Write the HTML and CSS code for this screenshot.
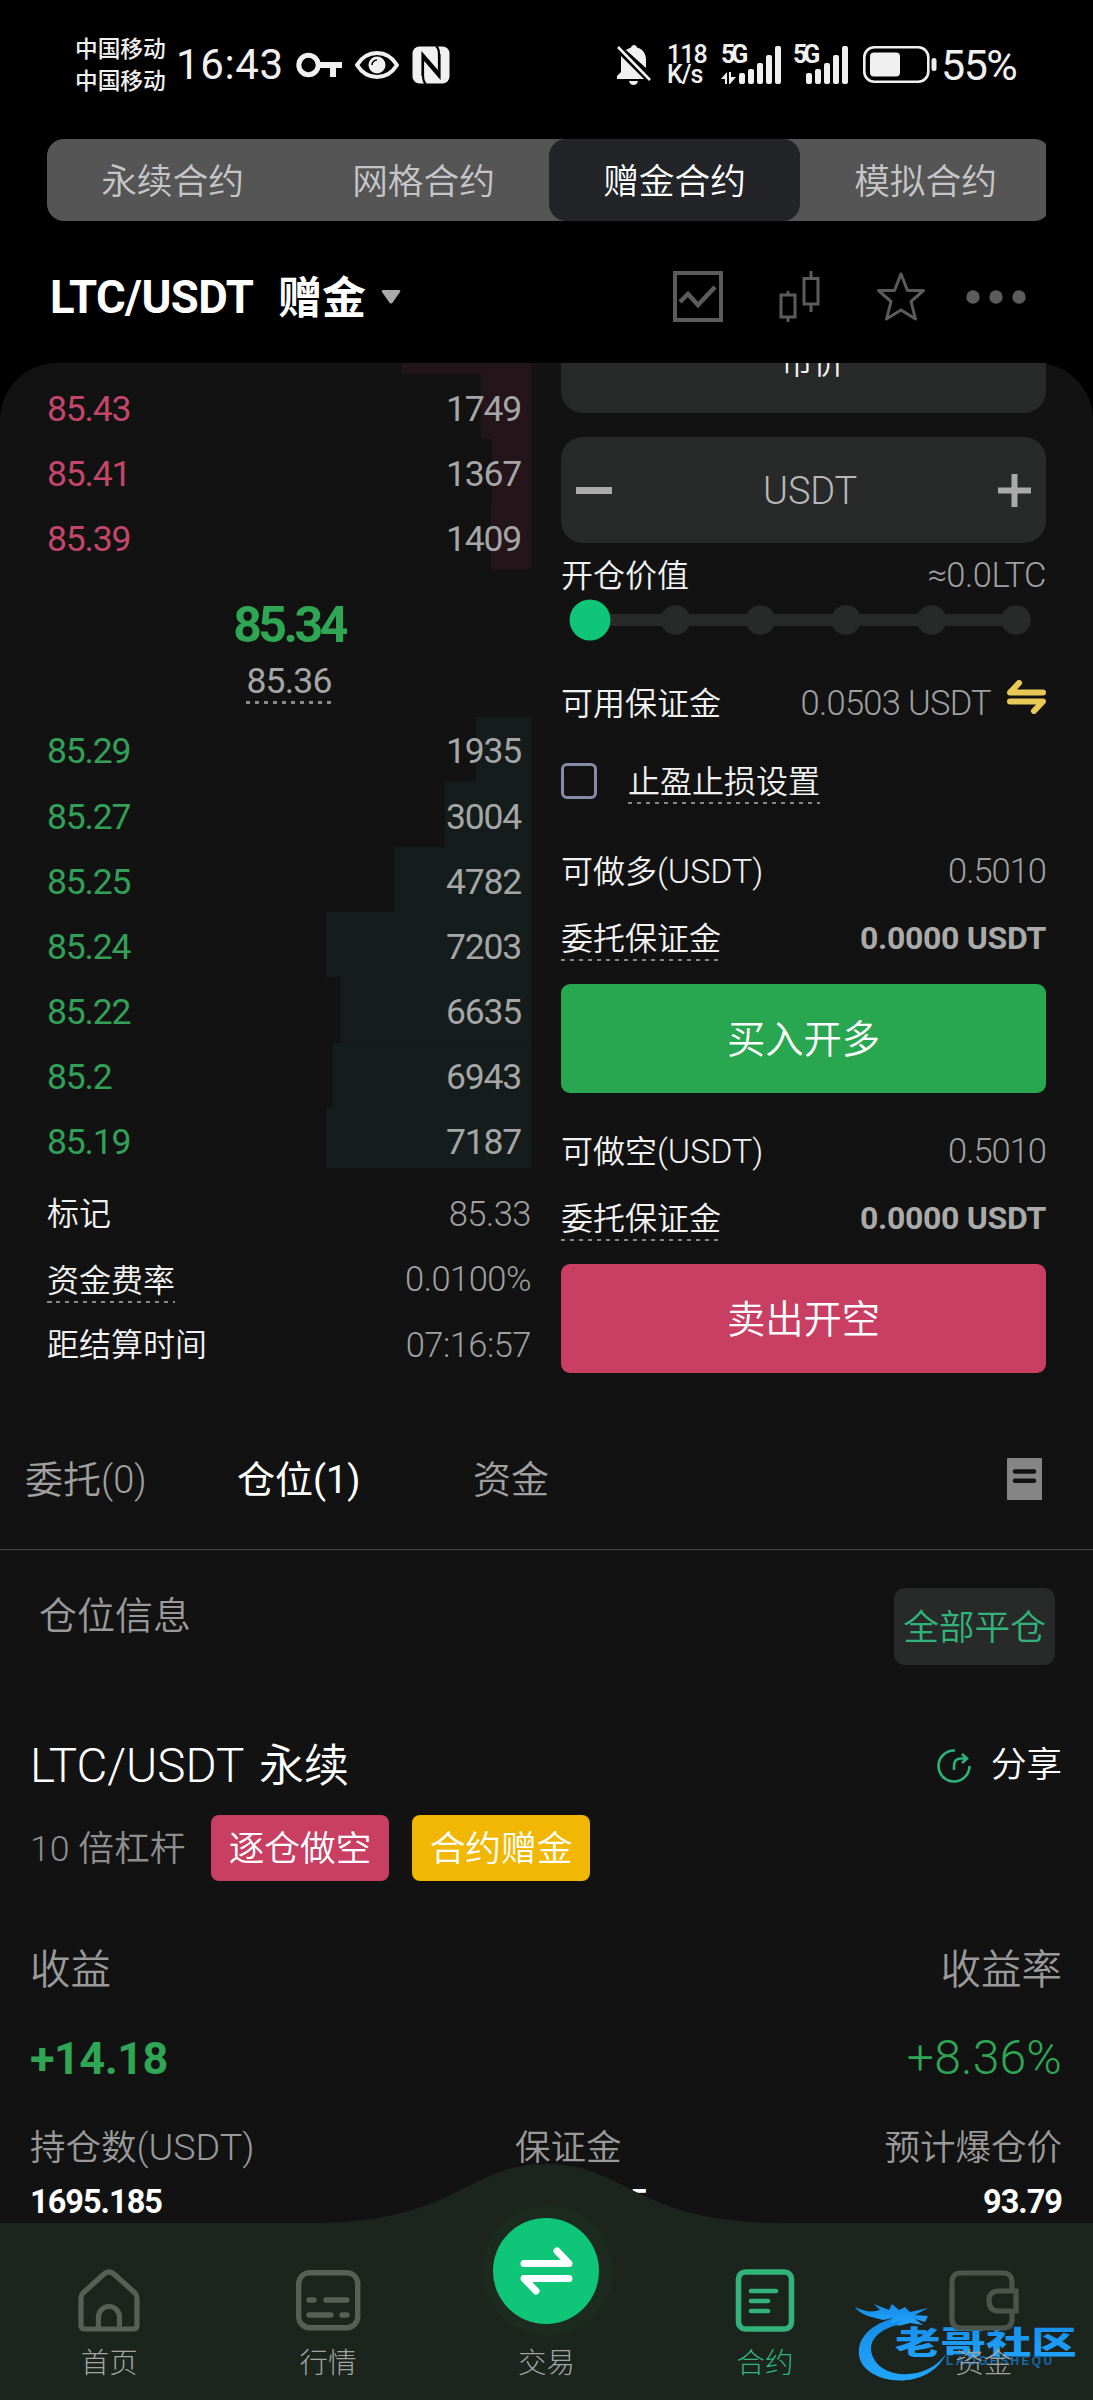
FILE: index.html
```html
<!DOCTYPE html>
<html lang="zh-CN">
<head>
<meta charset="utf-8">
<title>LTC/USDT 赠金合约</title>
<link rel="stylesheet" href="styles.css">
</head>
<body>
<div class="phone">
  <header class="status">
    <div class="carrier"><span>中国移动</span><span>中国移动</span></div>
    <span class="clock">16:43</span>
    <svg class="i-key" width="47" height="26" viewBox="0 0 47 26" fill="none" stroke="#f0f0f0"><circle cx="12.5" cy="13" r="9.7" stroke-width="5"/><path d="M22 13H46M37 13V25" stroke-width="6"/></svg>
    <svg class="i-eye" width="44" height="30" viewBox="0 0 44 30"><path d="M2 15C12-1 32-1 42 15C32 31 12 31 2 15Z" fill="none" stroke="#f0f0f0" stroke-width="4"/><circle cx="22" cy="15" r="8.5" fill="#f0f0f0"/><path d="M17 15a5 5 0 0 1 5-5" fill="none" stroke="#000" stroke-width="1.6"/></svg>
    <svg class="i-nfc" width="38" height="38" viewBox="0 0 38 38"><rect x=".5" y=".5" width="37" height="37" rx="7" fill="#f0f0f0"/><path d="M10.500 30V8L27 27V9Q27 2 24 0M27.500 8V31L11 12V29Q11 36 14 38" fill="none" stroke="#000" stroke-width="2.200"/></svg>
    <span class="grow"></span>
    <svg class="i-bell" width="36" height="40" viewBox="0 0 36 40"><path d="M18 0a3 3 0 0 1 3 2.500C27 4 30 9 30 15V23L10 5Q12 3.500 15 2.500A3 3 0 0 1 18 0ZM5 11L28 34H1V31L5 27Z" fill="#f0f0f0"/><path d="M13 36H22Q21 40 17.500 40T13 36Z" fill="#f0f0f0"/><path d="M2 2L34 35" stroke="#f0f0f0" stroke-width="2.600"/></svg>
    <div class="speed"><span>118</span><span>K/s</span></div>
    <div class="signal signal-a"><span>5G</span>
      <svg width="61" height="38" viewBox="0 0 61 38" fill="#f0f0f0"><path d="M0 33L6 26V38H4V33ZM8 26H10L10 31H15L9 38H8Z"/><rect x="18" y="27" width="6" height="11" rx="2"/><rect x="27" y="23" width="6" height="15" rx="2"/><rect x="36" y="17" width="6" height="21" rx="2"/><rect x="45" y="9" width="6" height="29" rx="2"/><rect x="54" y="0" width="6" height="38" rx="2"/></svg>
    </div>
    <div class="signal signal-b"><span>5G</span>
      <svg width="56" height="38" viewBox="0 0 56 38" fill="#f0f0f0"><rect x="13" y="27" width="6" height="11" rx="2"/><rect x="22" y="23" width="6" height="15" rx="2"/><rect x="31" y="17" width="6" height="21" rx="2"/><rect x="40" y="9" width="6" height="29" rx="2"/><rect x="49" y="0" width="6" height="38" rx="2"/></svg>
    </div>
    <svg class="i-batt" width="74" height="38" viewBox="0 0 74 38"><rect x="1.300" y="1.300" width="64" height="34.400" rx="10" fill="none" stroke="#f0f0f0" stroke-width="2.600"/><rect x="7" y="6.500" width="30" height="24" rx="4" fill="#f0f0f0"/><rect x="68.500" y="12" width="5" height="13" rx="2.500" fill="#f0f0f0"/></svg>
    <span class="percent">55%</span>
  </header>

  <div class="modes">
    <nav class="modes-bar"><a>永续合约</a><a>网格合约</a><a class="on">赠金合约</a><a>模拟合约</a></nav>
  </div>

  <div class="pair">
    <b class="pair-name">LTC/USDT</b><b class="pair-kind">赠金</b>
    <svg width="20" height="16" viewBox="0 0 20 16"><path d="M2 1H18Q20 1 19 3L12 13Q10 16 8 13L1 3Q0 1 2 1Z" fill="#aaa"/></svg>
    <span class="grow"></span>
    <svg width="50" height="51" viewBox="0 0 50 51" fill="none" stroke="#5b5b5b"><rect x="2" y="2" width="46" height="47" stroke-width="4"/><path d="M7 31L15 23L25 34L42 16" stroke-width="4.500"/></svg>
    <svg class="i-candle" width="42" height="51" viewBox="0 0 42 51" fill="none" stroke="#5b5b5b" stroke-width="3"><rect x="2" y="24" width="14" height="22"/><path d="M9 20V24M9 46V51M32 0V7M32 33V41"/><rect x="25" y="7.500" width="14" height="25.500"/></svg>
    <svg class="i-star" width="50" height="51" viewBox="0 0 50 51"><path d="M25 3L31.500 19.500H47.500L35 30.500L39.500 48L25 39L10.500 48L15 30.500L2.500 19.500H18.500Z" fill="none" stroke="#5b5b5b" stroke-width="3" stroke-linejoin="round"/></svg>
    <svg class="i-more" width="60" height="14" viewBox="0 0 60 14" fill="#5b5b5b"><circle cx="7" cy="7" r="6.700"/><circle cx="30" cy="7" r="6.700"/><circle cx="53" cy="7" r="6.700"/></svg>
  </div>

  <main class="sheet">
    <section class="trade">
      <div class="book">
        <div class="asks">
          <div class="row cut" style="--w:129px"></div>
          <div class="row" style="--w:50px"><span>85.43</span><i>1749</i></div>
          <div class="row" style="--w:39px"><span>85.41</span><i>1367</i></div>
          <div class="row" style="--w:40px"><span>85.39</span><i>1409</i></div>
        </div>
        <div class="last"><b>85.34</b><span class="dash">85.36</span></div>
        <div class="bids">
          <div class="row" style="--w:55px"><span>85.29</span><i>1935</i></div>
          <div class="row" style="--w:86px"><span>85.27</span><i>3004</i></div>
          <div class="row" style="--w:137px"><span>85.25</span><i>4782</i></div>
          <div class="row" style="--w:205px"><span>85.24</span><i>7203</i></div>
          <div class="row" style="--w:190px"><span>85.22</span><i>6635</i></div>
          <div class="row" style="--w:198px"><span>85.2</span><i>6943</i></div>
          <div class="row" style="--w:205px"><span>85.19</span><i>7187</i></div>
        </div>
        <div class="facts">
          <div><span>标记</span><em>85.33</em></div>
          <div><span class="dash">资金费率</span><em>0.0100%</em></div>
          <div><span>距结算时间</span><em>07:16:57</em></div>
        </div>
      </div>

      <div class="order">
        <div class="type-clip"><div class="field type">市价</div></div>
        <div class="field amount">
          <svg width="36" height="33" viewBox="0 0 36 33"><path d="M0 16.500H36" stroke="#aaa" stroke-width="7"/></svg>
          <span>USDT</span>
          <svg width="33" height="33" viewBox="0 0 33 33"><path d="M0 16.500H33M16.500 0V33" stroke="#aaa" stroke-width="6"/></svg>
        </div>
        <div class="line value"><span>开仓价值</span><em>≈0.0LTC</em></div>
        <svg class="slider" width="485" height="42" viewBox="0 0 485 42" fill="#282a29"><path d="M29 21H455" stroke="#282a29" stroke-width="12"/><circle cx="114.500" cy="21" r="14.800"/><circle cx="199.500" cy="21" r="14.800"/><circle cx="285" cy="21" r="14.800"/><circle cx="370.500" cy="21" r="14.800"/><circle cx="455" cy="21" r="14.800"/><circle cx="29" cy="21" r="20.500" fill="#0ec578"/></svg>
        <div class="line avail"><span>可用保证金</span><em>0.0503 USDT</em>
          <svg width="39" height="34" viewBox="0 0 39 34" fill="none" stroke="#e8c955" stroke-width="6" stroke-linecap="round" stroke-linejoin="round"><path d="M36 12.500H3L12 3M3 21.500H36L27 31"/></svg></div>
        <div class="line stop"><i class="box"></i><span class="dash">止盈止损设置</span></div>
        <div class="line can"><span>可做多<u>(USDT)</u></span><em>0.5010</em></div>
        <div class="line cost"><span class="dash">委托保证金</span><b>0.0000 USDT</b></div>
        <div class="btn buy">买入开多</div>
        <div class="line can short"><span>可做空<u>(USDT)</u></span><em>0.5010</em></div>
        <div class="line cost"><span class="dash">委托保证金</span><b>0.0000 USDT</b></div>
        <div class="btn sell">卖出开空</div>
      </div>
    </section>

    <nav class="tabs"><a>委托(0)</a><a class="on">仓位(1)</a><a>资金</a>
      <svg width="35" height="42" viewBox="0 0 35 42"><rect width="35" height="42" rx="1" fill="#858585"/><path d="M8 13.500H27M8 22.800H27" stroke="#121212" stroke-width="4.600" stroke-linecap="round"/></svg>
    </nav>

    <section class="position">
      <div class="head"><span>仓位信息</span><a>全部平仓</a></div>
      <div class="title"><span class="sym">LTC/USDT <span class="perp">永续</span></span>
        <span class="share"><svg width="34" height="34" viewBox="0 0 34 34" fill="none" stroke="#2db277" stroke-width="2.600"><path d="M18 1.500A15.500 15.500 0 1 0 32.500 17"/><path d="M17 21V17Q17 9.500 24 9.500H29M25 5L30 9.500L25 14"/></svg>分享</span></div>
      <div class="tags"><span>10 倍杠杆</span><i class="red">逐仓做空</i><i class="gold">合约赠金</i></div>
      <div class="pl-label"><span>收益</span><span>收益率</span></div>
      <div class="pl"><b>+14.18</b><span>+8.36%</span></div>
      <div class="cols labels"><span>持仓数<u>(USDT)</u></span><span>保证金</span><span>预计爆仓价</span></div>
      <div class="cols vals"><span>1695.185</span><span>1695.185</span><span>93.79</span></div>
    </section>
  </main>

  <nav class="dock">
    <svg class="dock-bg" width="1093" height="240" viewBox="0 0 1093 240"><path d="M0 63H310C458 63 466 4 546.500 4C627 4 635 63 783 63H1093V240H0Z" fill="#1c241e"/><circle cx="547.500" cy="111" r="65" fill="#1c2a1f"/></svg>
    <svg class="mark" width="240" height="90" viewBox="0 0 240 90">
      <defs><linearGradient id="blue" x1="0" y1="0" x2="0" y2="1"><stop offset="0" stop-color="#168be8"/><stop offset="1" stop-color="#22a5fb"/></linearGradient></defs>
      <path d="M48 14C16 20 2 36 4 53C7 82 72 92 91 52C72 79 29 77 19 57C9 40 25 25 49 22Z" fill="url(#blue)"/>
      <path d="M0 5Q14 12 25 8L19 2L34 8L37 2L44 8L50 5L55 10L73 6L60 13L73 14L70 20L60 17L68 23L55 21L43 24L46 18L35 22L38 16L28 18L13 14Q4 11 0 5Z" fill="url(#blue)"/>
      <text class="mark-name" transform="translate(40 52) scale(1.010 .7)">老哥社区</text>
      <text class="mark-latin" x="91" y="63">LAOGESHEQU</text>
    </svg>
    <a><svg width="64" height="64" viewBox="0 0 64 64" fill="none" stroke="#566056" stroke-width="5.200" stroke-linejoin="round"><path d="M4 29Q4 26 6 24L27 5Q32 1 37 5L58 24Q60 26 60 29V56Q60 60 56 60H8Q4 60 4 56Z"/><path d="M21.500 60V48a10.500 10.500 0 0 1 21 0V60"/></svg>首页</a>
    <a><svg width="66" height="64" viewBox="0 0 66 64" fill="none" stroke="#566056" stroke-width="5.400" stroke-linecap="round"><rect x="3.700" y="3.700" width="59" height="55" rx="11"/><path d="M14 31H19M31 31H52M14 46H36M47 46H52"/></svg>行情</a>
    <a class="trade-tab"><svg width="106" height="106" viewBox="0 0 106 106" fill="none" stroke="#fff" stroke-width="7" stroke-linecap="round" stroke-linejoin="round"><circle cx="53" cy="53" r="53" fill="#0ec578" stroke="none"/><path d="M31 45.500H76L64 33M76 60.500H31L43 73"/></svg>交易</a>
    <a class="on"><svg width="60" height="64" viewBox="0 0 60 64" fill="none" stroke="#32b37a" stroke-width="5.600" stroke-linecap="round"><rect x="3.500" y="3" width="53" height="57" rx="7"/><path d="M16 22H41M16 32H33M16 42H33" stroke-width="4.600"/></svg>合约</a>
    <a><svg width="70" height="64" viewBox="0 0 70 64" fill="none" stroke="#4b554c" stroke-width="5.200"><path d="M63 22V13Q63 4 54 4H12Q3 4 3 13V49Q3 59 12 59H54Q63 59 63 50V43M67 22H50Q40 22 40 32T50 42H67Z"/></svg>资金</a>
  </nav>
</div>
</body>
</html>
```
FILE: styles.css
```css
* { box-sizing: border-box; }
body { margin: 0; background: #000; }
.phone {
  position: relative; width: 1093px; height: 2400px; overflow: hidden;
  background: #000; color: #f2f2f2; line-height: 1.2;
  font-family: Roboto, "Noto Sans CJK SC", sans-serif; font-weight: 350;
}
i, em { font-style: normal; }
u { text-decoration: none; font-weight: 300; font-size: 1.06em; }
b { font-weight: 700; }
svg { display: block; flex: none; }
.grow { flex: 1; }

/* status bar */
.status { display: flex; align-items: center; height: 139px; padding: 0 75px 10px 75px; color: #f0f0f0; font-weight: 400; }
.carrier { display: flex; flex-direction: column; width: 101px; padding-top: 2px; font-size: 22.700px; line-height: 32px; font-weight: 500; }
.clock { font-size: 42px; width: 120px; padding-top: 2px; letter-spacing: .6px; }
.i-eye { margin-left: 12px; }
.i-nfc { margin-left: 13px; }
.i-bell { margin-right: 15px; }
.speed { display: flex; flex-direction: column; width: 54px; font-size: 25px; line-height: 19.500px; font-weight: 500; letter-spacing: -1px; }
.signal { display: grid; }
.signal > * { grid-area: 1 / 1; }
.signal span { font-size: 25px; line-height: 18px; font-weight: 700; letter-spacing: -4px; }
.signal-a { width: 72px; }
.signal-b { width: 70px; }
.percent { font-size: 43px; width: 77px; margin-left: 4px; padding-top: 2px; letter-spacing: -1.500px; }

/* contract mode switch */
.modes { height: 82px; margin: 0 47px; overflow: hidden; }
.modes-bar { display: grid; grid-template-columns: repeat(4, 251px); width: 1004px; height: 82px; border-radius: 17px; background: #555; font-size: 35.700px; color: #c6c6c8; }
.modes-bar a { display: flex; align-items: center; justify-content: center; padding-top: 4px; }
.modes-bar .on { border-radius: 17px; background: #222428; color: #fff; }

.pair { display: flex; align-items: center; height: 142px; padding: 9px 67px 0 50px; color: #fff; }
.pair-name { font-size: 45.500px; width: 228px; padding-top: 3px; letter-spacing: -.6px; }
.pair-kind { font-size: 44px; width: 103px; padding-top: 5px; }
.i-candle { margin-left: 56px; }
.i-star { margin-left: 55px; }
.i-more { margin-left: 40px; }

.sheet { height: 2037px; border-radius: 57px 57px 0 0; background: #121212; }
.trade { display: flex; gap: 30px; height: 1010px; padding-left: 47px; }

/* order book */
.book { width: 484px; }
.row { display: flex; justify-content: space-between; align-items: center; height: 65.200px; padding: 5px 10px 0 0; font-size: 35.500px; letter-spacing: -1.200px; font-weight: 450; color: #a6a6a6; }
.asks .row { background: linear-gradient(#23151a, #23151a) right / var(--w) 100% no-repeat; }
.asks .cut { height: 11px; padding: 0; }
.bids { height: 451px; overflow: hidden; }
.bids .row { background: linear-gradient(#141d1b, #141d1b) right / var(--w) 100% no-repeat; }
.asks span { color: #c4476a; }
.bids span { color: #33a058; }
.last { display: flex; flex-direction: column; align-items: center; height: 147px; padding: 27px 0 0; }
.last b { font-size: 50px; line-height: 56px; letter-spacing: -3.500px; color: #2fa653; }
.last .dash { margin-top: 4px; height: 47px; line-height: 48px; font-size: 35.500px; letter-spacing: -.8px; font-weight: 450; color: #a6a6a6; background-size: 100% 3px; }
.dash { display: block; height: 46px; line-height: 48px; background: repeating-linear-gradient(90deg, #8a8a8a 0 4.500px, transparent 4.500px 9px) bottom / 100% 2px no-repeat; }
.facts { padding-top: 14px; font-size: 32px; }
.facts div { display: flex; justify-content: space-between; align-items: center; height: 65.500px; }
em { font-size: 34.500px; font-weight: 300; letter-spacing: -.5px; color: #a0a0a0; }

/* order form */
.order { width: 485px; }
.field { height: 106px; border-radius: 22px; background: #282a29; }
.type-clip { display: flex; align-items: flex-end; height: 50px; overflow: hidden; }
.type { width: 100%; flex: none; padding-left: 19px; text-align: center; line-height: 113px; font-size: 32px; }
.amount { display: flex; align-items: center; justify-content: space-between; margin-top: 24px; padding: 0 15px; font-size: 38px; font-weight: 300; color: #b7b7bc; }
.amount span { padding: 3px 0 0 10px; letter-spacing: -.2px; }
.line { display: flex; align-items: center; justify-content: space-between; height: 60px; padding-top: 2px; font-size: 32px; }
.value { height: 56px; padding-top: 10px; }
.avail { margin-top: 32px; }
.avail em { margin: 0 16px 0 auto; letter-spacing: -.7px; }
.avail svg { margin-top: -15px; }
.stop { justify-content: flex-start; gap: 31px; margin-top: 18px; padding-top: 0; }
.box { width: 36px; height: 36px; border: 3px solid #868ba6; border-radius: 6px; }
.can { margin-top: 30px; }
.can em { letter-spacing: -1px; }
.short { margin-top: 28px; }
.cost { margin-top: 7px; padding-top: 0; }
.cost b { font-size: 32px; letter-spacing: -.3px; color: #aaa; }
.btn { display: flex; align-items: center; justify-content: center; height: 109px; margin-top: 16px; padding-top: 2px; border-radius: 9px; font-size: 38.300px; color: #fff; }
.buy { background: #28a650; }
.sell { background: #c83f63; }

/* position tabs */
.tabs { display: flex; align-items: center; height: 177px; padding: 40px 51px 0 25px; border-bottom: 1px solid #484848; font-size: 38px; color: #a0a0a0; }
.tabs a { width: 212px; }
.tabs a + a { width: 236px; }
.tabs .on { color: #fff; font-weight: 400; }
.tabs svg { margin-left: auto; margin-top: -5px; }

.position { padding: 38px 31px 0 30px; }
.position > div { display: flex; justify-content: space-between; align-items: center; }
.head span { align-self: flex-start; margin-left: 9px; font-size: 38px; line-height: 56px; color: #9a9a9a; }
.head a { display: flex; align-items: center; justify-content: center; width: 161px; height: 77px; margin-right: 7px; padding-top: 4px; border-radius: 11px; background: #282a29; font-size: 35.700px; color: #32b37a; }
.title { height: 70px; margin-top: 65px; }
.sym { padding-top: 2px; font-size: 47.500px; font-weight: 300; letter-spacing: 0; word-spacing: 4px; color: #fff; }
.perp { font-size: 45px; font-weight: 350; letter-spacing: 0; }
.share { display: flex; align-items: center; gap: 20px; padding-top: 1px; font-size: 35.500px; color: #fff; }
.position > .tags { justify-content: flex-start; height: 66px; margin-top: 15px; font-size: 35.700px; color: #8e8e8e; }
.tags span { width: 181px; padding-top: 3px; }
.tags i { width: 178px; height: 66px; line-height: 69px; margin-right: 23px; border-radius: 8px; text-align: center; color: #fff; }
.red { background: #c83f63; }
.gold { background: #f1b703; }
.position > .pl-label { height: 60px; margin-top: 58px; padding-top: 3px; font-size: 40.500px; color: #9a9a9a; }
.pl { height: 60px; margin-top: 29px; color: #2fa653; }
.pl b { font-size: 45px; padding-top: 2px; letter-spacing: -.5px; }
.pl span { font-size: 48px; font-weight: 300; letter-spacing: .2px; }
.position > .cols { display: grid; grid-template-columns: 485px 1fr auto; }
.position > .labels { height: 60px; margin-top: 29px; padding-top: 2px; font-size: 35.500px; color: #9a9a9a; }
.position > .vals { height: 50px; font-size: 32.500px; font-weight: 700; letter-spacing: -1px; color: #fff; }

/* bottom navigation, laid over the scrolling page */
.dock { position: absolute; left: 0; bottom: 0; display: grid; grid-template-columns: repeat(5, 1fr); width: 1093px; height: 240px; }
.dock-bg { position: absolute; left: 0; top: 0; }
.mark { position: absolute; left: 855px; top: 142px; }
.mark-name { font: 900 45px "Noto Sans CJK SC", sans-serif; fill: url(#blue); }
.mark-latin { font: 700 12px "Liberation Sans", sans-serif; letter-spacing: 2.300px; fill: #176aa8; }
.dock a { position: relative; display: flex; flex-direction: column; align-items: center; justify-content: flex-end; gap: 11px; padding-bottom: 16px; font-size: 28.500px; line-height: 40px; font-weight: 300; color: #a1a4a1; }
.dock .trade-tab { gap: 20px; }
.dock .on { color: #32b37a; }
```
